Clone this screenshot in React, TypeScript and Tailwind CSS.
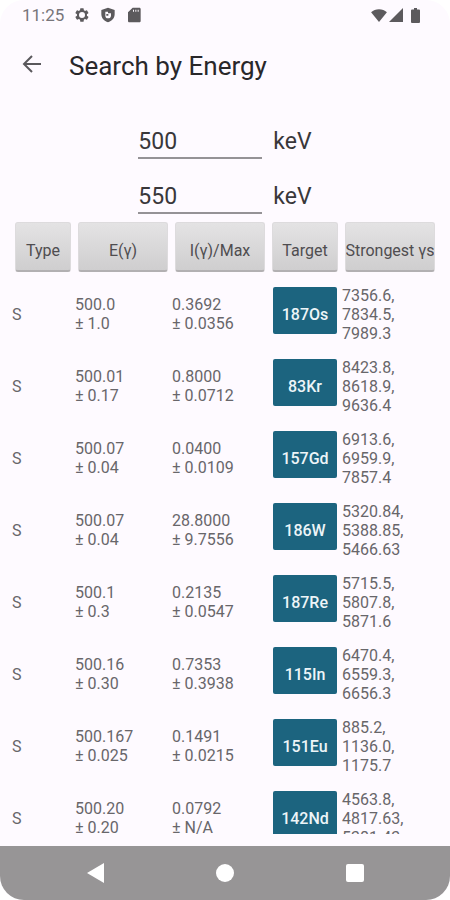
import React from "react";

type Line = {
  energy: string;
  energyErr: string;
  intensity: string;
  intensityErr: string;
  target: string;
  strongest: string[];
};

const lines: Line[] = [
  { energy: "500.0", energyErr: "1.0", intensity: "0.3692", intensityErr: "0.0356", target: "187Os", strongest: ["7356.6,", "7834.5,", "7989.3"] },
  { energy: "500.01", energyErr: "0.17", intensity: "0.8000", intensityErr: "0.0712", target: "83Kr", strongest: ["8423.8,", "8618.9,", "9636.4"] },
  { energy: "500.07", energyErr: "0.04", intensity: "0.0400", intensityErr: "0.0109", target: "157Gd", strongest: ["6913.6,", "6959.9,", "7857.4"] },
  { energy: "500.07", energyErr: "0.04", intensity: "28.8000", intensityErr: "9.7556", target: "186W", strongest: ["5320.84,", "5388.85,", "5466.63"] },
  { energy: "500.1", energyErr: "0.3", intensity: "0.2135", intensityErr: "0.0547", target: "187Re", strongest: ["5715.5,", "5807.8,", "5871.6"] },
  { energy: "500.16", energyErr: "0.30", intensity: "0.7353", intensityErr: "0.3938", target: "115In", strongest: ["6470.4,", "6559.3,", "6656.3"] },
  { energy: "500.167", energyErr: "0.025", intensity: "0.1491", intensityErr: "0.0215", target: "151Eu", strongest: ["885.2,", "1136.0,", "1175.7"] },
  { energy: "500.20", energyErr: "0.20", intensity: "0.0792", intensityErr: "N/A", target: "142Nd", strongest: ["4563.8,", "4817.63,", "5381.43"] },
];

const columns = ["Type", "E(γ)", "I(γ)/Max", "Target", "Strongest γs"];

const grid =
  "grid grid-cols-[minmax(0,56fr)_minmax(0,90fr)_minmax(0,90fr)_minmax(0,66fr)_minmax(0,90fr)] gap-x-[7px]";

function StatusBar() {
  return (
    <div className="flex h-[30px] shrink-0 items-center justify-between pl-[22px] pr-[30px] text-[#5c5a5d]">
      <div className="flex items-center">
        <span className="w-[52px] text-[17px] leading-5 text-[#77757a]">11:25</span>
        <svg className="mr-[10px] size-4" viewBox="0 0 24 24" fill="currentColor" aria-hidden="true">
          <path
            fillRule="evenodd"
            d="M19.4 13a7.5 7.5 0 0 0 0-2l2.1-1.7a.5.5 0 0 0 .1-.6l-2-3.5a.5.5 0 0 0-.6-.2l-2.5 1a7.3 7.3 0 0 0-1.7-1l-.4-2.600a.5.5 0 0 0-.5-.4h-4a.5.5 0 0 0-.5.4L9 5a7.700 7.700 0 0 0-1.700 1l-2.500-1a.5.5 0 0 0-.6.200l-2 3.500a.5.5 0 0 0 .1.600L4.500 11a8 8 0 0 0 0 2l-2.200 1.700a.5.5 0 0 0-.1.600l2 3.500c.1.200.4.300.6.200l2.500-1a7.300 7.300 0 0 0 1.700 1l.4 2.600c0 .2.2.4.5.4h4c.3 0 .5-.2.5-.4l.4-2.600a7.700 7.700 0 0 0 1.700-1l2.500 1c.2.1.5 0 .6-.2l2-3.500a.5.5 0 0 0-.1-.6zM12 16.500a4.500 4.500 0 1 1 0-9 4.500 4.500 0 0 1 0 9z"
          />
        </svg>
        <svg className="mr-[10px] size-4" viewBox="0 0 24 24" fill="currentColor" aria-hidden="true">
          <path
            fillRule="evenodd"
            d="M12 1 2 4.500V11c0 5.600 4.300 10.500 10 12 5.700-1.500 10-6.400 10-12V4.500zM8 7h4v2.500h4.500v3.500c0 2.300-1.900 4-4.500 4s-4-1.700-4-4z"
          />
          <path d="M9.500 10.500h3v2.500h-3z" />
        </svg>
        <svg className="size-4" viewBox="0 0 24 24" fill="currentColor" aria-hidden="true">
          <path
            fillRule="evenodd"
            d="M20 1H10L3 8v13c0 1.100.9 2 2 2h15c1.100 0 2-.9 2-2V3c0-1.100-.9-2-2-2zM10.500 4H12v3h-1.500zM14 4h1.500v3H14zM17.500 4H19v3h-1.500z"
          />
        </svg>
      </div>
      <div className="flex items-center">
        <svg className="h-[13px] w-4" viewBox="0 0 17 14" fill="currentColor" aria-hidden="true">
          <path d="M8.500 14 0 3.500C2.300 1.400 5.200.3 8.500.3s6.200 1.100 8.500 3.200z" />
        </svg>
        <svg className="ml-[2px] size-[14px]" viewBox="0 0 14 14" fill="currentColor" aria-hidden="true">
          <path d="M14 0v14H0z" />
        </svg>
        <svg className="ml-2 h-[15px] w-[9px]" viewBox="0 0 9 15" fill="currentColor" aria-hidden="true">
          <path d="M3 0h3v1.500h2a1 1 0 0 1 1 1V14a1 1 0 0 1-1 1H1a1 1 0 0 1-1-1V2.500a1 1 0 0 1 1-1h2z" />
        </svg>
      </div>
    </div>
  );
}

function EnergyField({ id, label, value }: { id: string; label: string; value: string }) {
  return (
    <div className="flex h-[55px] items-start justify-center gap-[11px] text-[23px] leading-8 text-[#39373a]">
      <input
        id={id}
        aria-label={label}
        inputMode="decimal"
        defaultValue={value}
        className="h-9 w-[124px] border-b-2 border-[#959296] bg-transparent pt-[3px] outline-none"
      />
      <label htmlFor={id} className="pt-[3px]">keV</label>
    </div>
  );
}

export default function App() {
  return (
    <div className="h-screen bg-white font-[Roboto,sans-serif]">
      <div className="flex h-full flex-col overflow-hidden rounded-3xl bg-[#fefaff]">
        <StatusBar />
        <header className="flex h-[72px] shrink-0 items-center gap-[26px] pl-[21px]">
          <button type="button" aria-label="Back" className="pb-1 text-[#5a585c]">
            <svg className="size-[22px]" viewBox="0 0 22 22" fill="none" stroke="currentColor" strokeWidth="2" aria-hidden="true">
              <path d="M20 11H3M11 3 3 11l8 8" />
            </svg>
          </button>
          <h1 className="text-[26px] leading-8 text-[#29272a]">Search by Energy</h1>
        </header>
        <main className="flex min-h-0 flex-1 flex-col pb-3">
          <form className="shrink-0 pt-[21px]">
            <EnergyField id="from" label="Minimum energy" value="500" />
            <EnergyField id="to" label="Maximum energy" value="550" />
          </form>
          <table className="-mt-[11px] flex min-h-0 flex-1 flex-col">
            <thead className="block shrink-0 px-[15px] pb-[6px]">
              <tr className={grid}>
                {columns.map((name) => (
                  <th key={name} scope="col" className="block p-0 font-normal">
                    <button
                      type="button"
                      className="flex h-[50px] w-full items-center justify-center overflow-hidden whitespace-nowrap rounded-[3px] border border-b-2 border-[#dddbdd] border-b-[#b2b0b2] bg-linear-to-b from-[#e4e3e4] to-[#cfcecf] pt-2 text-base leading-5 text-[#4f4d50]"
                    >
                      {name}
                    </button>
                  </th>
                ))}
              </tr>
            </thead>
            <tbody className="block min-h-0 flex-1 overflow-y-auto text-base leading-[19px] text-[#68666a] [scrollbar-width:none]">
              {lines.map((line) => (
                <tr key={line.target} className={`${grid} h-[72px] items-center pl-3 pr-[18px]`}>
                  <td className="block">S</td>
                  <td className="block">
                    <div>{line.energy}</div>
                    <div>± {line.energyErr}</div>
                  </td>
                  <td className="block">
                    <div>{line.intensity}</div>
                    <div>± {line.intensityErr}</div>
                  </td>
                  <td className="block self-start pl-1 pt-[9px]">
                    <button
                      type="button"
                      className="flex h-[47px] w-16 items-center justify-center rounded-xs bg-[#1c647f] pt-2 font-medium leading-5 text-[#edf5f8]"
                    >
                      {line.target}
                    </button>
                  </td>
                  <td className="block">
                    {line.strongest.map((value) => (
                      <div key={value}>{value}</div>
                    ))}
                  </td>
                </tr>
              ))}
            </tbody>
          </table>
        </main>
        <nav className="grid h-[54px] shrink-0 grid-cols-3 place-items-center bg-[#979596] px-[30px] text-white">
          <button type="button" aria-label="Back">
            <svg className="h-5 w-[17px]" viewBox="0 0 17 20" fill="currentColor" aria-hidden="true">
              <path d="M17 0v20L0 10z" />
            </svg>
          </button>
          <button type="button" aria-label="Home" className="size-[18px] rounded-full bg-white" />
          <button type="button" aria-label="Overview" className="size-[18px] rounded-xs bg-white" />
        </nav>
      </div>
    </div>
  );
}
